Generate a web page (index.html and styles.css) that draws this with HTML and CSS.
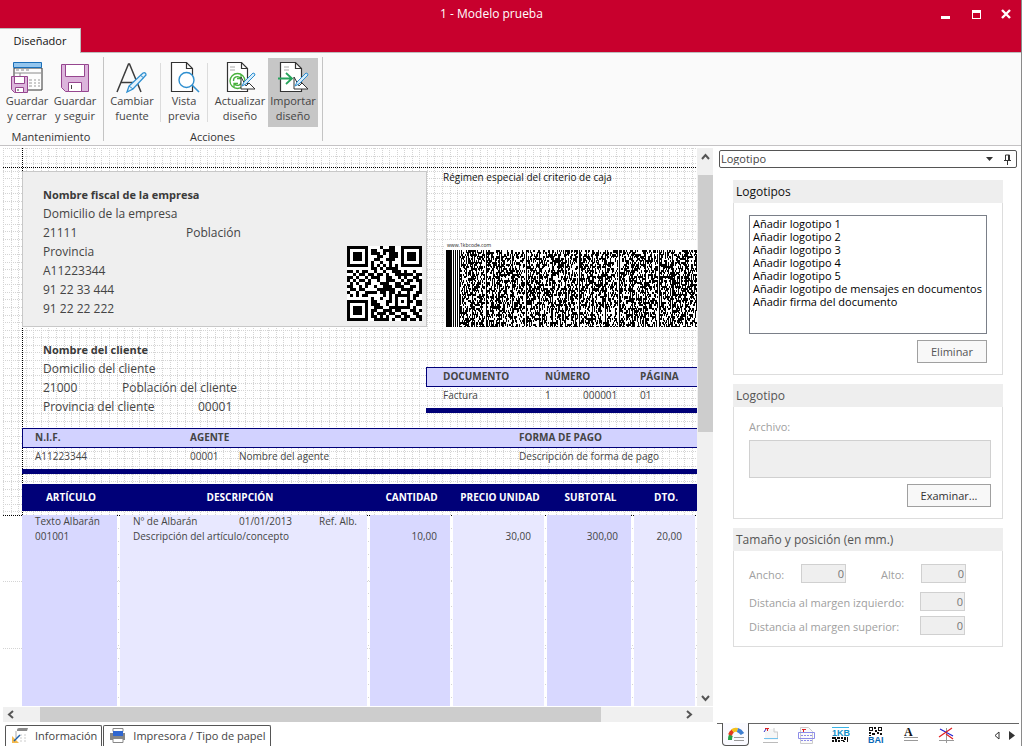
FILE: index.html
```
<!DOCTYPE html>
<html lang="es">
<head>
<meta charset="utf-8">
<title>1 - Modelo prueba</title>
<link rel="stylesheet" href="styles.css">
</head>
<body>
<div class="window">
  <header class="titlebar">
    <h1 class="title">1 - Modelo prueba</h1>
    <button class="winbtn" aria-label="Minimizar"><svg width="12" height="12"><path d="M1 8h9v3H1z" fill="#fff"/></svg></button>
    <button class="winbtn" aria-label="Maximizar"><svg width="12" height="12"><path fill="#fff" fill-rule="evenodd" d="M2 2h9v9H2zM3 5v5h7V5z"/></svg></button>
    <button class="winbtn" aria-label="Cerrar"><svg width="12" height="12"><path d="M2 2l8 8M10 2l-8 8" stroke="#fff" stroke-width="2.4"/></svg></button>
  </header>
  <nav class="tabrow"><button class="ribtab">Diseñador</button></nav>

  <section class="ribbon">
    <div class="group">
      <div class="tools">
        <button class="tool w48">
          <svg width="32" height="32"><path d="M3 7h28v22H3z" fill="#fdfdfd" stroke="#333"/><path d="M2.500 1.500h28v5h-28z" fill="#94c6ee" stroke="#1a6fb8"/><path d="M5 9h3m2 0h3m2 0h3M3 12h27M9 12v4" stroke="#8a8a8a" fill="none"/><path d="M18 19h3m2 0h2m2 0h2M18 22h3m2 0h2m2 0h2M18 25h3m2 0h2m2 0h2" stroke="#999"/><path d="M.5 15.500h16v16H3.500l-3-3z" fill="#dcb5dc" stroke="#96468f"/><path d="M3.500 15.500h10v7h-10zM4.500 26.500h8v5h-8z" fill="#fff" stroke="#96468f"/><path d="M7 28v2" stroke="#444"/></svg>
          <span>Guardar<br>y cerrar</span></button>
        <button class="tool w48">
          <svg width="32" height="32"><path d="M2.500 3.500h27v27H6.500l-4-4z" fill="#dcb5dc" stroke="#96468f"/><path d="M6.500 3.500h19v12h-19zM9.500 21.500h13v9h-13z" fill="#fff" stroke="#96468f"/><path d="M12.500 24v4" stroke="#444"/></svg>
          <span>Guardar<br>y seguir</span></button>
      </div>
      <div class="caption">Mantenimiento</div>
    </div>
    <div class="group actions">
      <div class="tools">
        <button class="tool w50">
          <svg width="32" height="32" fill="none"><path d="M1 31L12.500 3h1L25 31M5 21.500h16" stroke="#3c3c3c" stroke-width="1.500"/><path d="M11 31l2-6L27 12q3-1 3 2L17 28z" fill="#e5f2fb" stroke="#2e8fd0" stroke-width="1.300"/><path d="M13 25l4 3M24 14l4 3" stroke="#2e8fd0"/></svg>
          <span>Cambiar<br>fuente</span></button>
        <i class="minisep"></i>
        <button class="tool w42">
          <svg width="32" height="32" fill="none"><path d="M3.500 1.500h15l6 6v23h-21z" fill="#fff" stroke="#333" stroke-width="1.200"/><path d="M18.500 1.500v6h6" stroke="#333" stroke-width="1.200"/><circle cx="18.500" cy="19" r="7.500" fill="#fff" stroke="#2e8fd0" stroke-width="1.400"/><path d="M24 24l7 7" stroke="#2e8fd0" stroke-width="1.600"/></svg>
          <span>Vista<br>previa</span></button>
        <i class="minisep"></i>
        <button class="tool w52">
          <svg width="32" height="32" fill="none"><path d="M3.500 1.500h14l6 6v23h-20z" fill="#fff" stroke="#333" stroke-width="1.200"/><path d="M17.500 1.500v6h6" stroke="#333" stroke-width="1.200"/><path d="M6 6h5M6 9h5" stroke="#aaa"/><circle cx="13.500" cy="20" r="7.500" stroke="#48b13c" stroke-width="1.300"/><path d="M9.500 20a4 4 0 0 1 7-3M17.500 20a4 4 0 0 1-7 3M17 14v3.500h-4M10 26v-3.500h4" stroke="#48b13c" stroke-width="1.300"/><path d="M17 16v12h14l-6-6-3 3z" fill="#fff" stroke="#333"/><path d="M18 25l2-4 9-9q2 0 2 2l-9 9z" fill="#d7ecfa" stroke="#2e8fd0"/></svg>
          <span>Actualizar<br>diseño</span></button>
        <button class="tool w50 on">
          <svg width="32" height="32" fill="none"><path d="M3.500 1.500h15l6 6v23h-21z" fill="#fff" stroke="#333" stroke-width="1.200"/><path d="M18.500 1.500v6h6" stroke="#333" stroke-width="1.200"/><path d="M7 6h5M7 9h5" stroke="#aaa"/><path d="M1 17.500h13M9 12l6 5.500-6 5.500" stroke="#27a35c" stroke-width="1.800"/><path d="M17 16v12h14l-6-6-3 3z" fill="#fff" stroke="#333"/><path d="M18 25l2-4 9-9q2 0 2 2l-9 9z" fill="#d7ecfa" stroke="#2e8fd0"/></svg>
          <span>Importar<br>diseño</span></button>
      </div>
      <div class="caption">Acciones</div>
    </div>
  </section>

  <main class="work">
    <section class="editor">
      <div class="viewport">
        <svg class="grid" id="grid" width="100%" height="100%"></svg>

        <div class="block company">
          <div class="lines">
            <b>Nombre fiscal de la empresa</b>
            <span>Domicilio de la empresa</span>
            <span class="pair"><span>21111</span><span>Población</span></span>
            <span>Provincia</span>
            <span>A11223344</span>
            <span>91 22 33 444</span>
            <span>91 22 22 222</span>
          </div>
          <canvas id="qr" width="75" height="75"></canvas>
        </div>

        <p class="block regime">Régimen especial del criterio de caja</p>
        <div class="block kb"><span>www.1kbcode.com</span><canvas id="kb" width="330" height="77"></canvas></div>

        <div class="block client lines">
          <b>Nombre del cliente</b>
          <span>Domicilio del cliente</span>
          <span class="town"><span>21000</span><span>Población del cliente</span></span>
          <span class="prov"><span>Provincia del cliente</span><span>00001</span></span>
        </div>

        <table class="block data docdata">
          <colgroup><col class="d1"><col class="d2"><col class="d3"><col></colgroup>
          <thead><tr><th>DOCUMENTO</th><th colspan="2">NÚMERO</th><th>PÁGINA</th></tr></thead>
          <tbody><tr><td>Factura</td><td>1</td><td>000001</td><td>01</td></tr></tbody>
        </table>

        <table class="block data nifdata">
          <colgroup><col class="n1"><col class="n2"><col class="n3"><col></colgroup>
          <thead><tr><th>N.I.F.</th><th colspan="2">AGENTE</th><th>FORMA DE PAGO</th></tr></thead>
          <tbody><tr><td>A11223344</td><td>00001</td><td>Nombre del agente</td><td>Descripción de forma de pago</td></tr></tbody>
        </table>

        <table class="block items">
          <colgroup><col class="c1"><col class="c2"><col class="c3"><col class="c4"><col class="c5"><col class="c6"><col></colgroup>
          <thead><tr><th>ARTÍCULO</th><th>DESCRIPCIÓN</th><th>CANTIDAD</th><th>PRECIO UNIDAD</th><th>SUBTOTAL</th><th>DTO.</th><th></th></tr></thead>
          <tbody>
            <tr><td>Texto Albarán</td><td><div class="note"><span>Nº de Albarán</span><span>01/01/2013</span><span>Ref. Alb.</span></div></td><td></td><td></td><td></td><td></td><td></td></tr>
            <tr><td>001001</td><td>Descripción del artículo/concepto</td><td class="num">10,00</td><td class="num">30,00</td><td class="num">300,00</td><td class="num">20,00</td><td></td></tr>
            <tr class="rest"><td></td><td></td><td></td><td></td><td></td><td></td><td></td></tr>
          </tbody>
        </table>
      </div>
      <div class="vbar"><svg width="15" height="27"><path d="M4 11l3.500-4 3.500 4" fill="none" stroke="#555" stroke-width="2"/></svg><div class="vthumb"></div><svg class="end" width="15" height="18"><path d="M4 8l3.500 4 3.500-4" fill="none" stroke="#555" stroke-width="2"/></svg></div>
      <div class="hbar"><svg width="37" height="15"><path d="M10 4L6 7.500l4 3.500" fill="none" stroke="#555" stroke-width="2"/></svg><div class="hthumb"></div><svg class="end" width="32" height="15"><path d="M6 4l4 3.500L6 11" fill="none" stroke="#555" stroke-width="2"/></svg></div>
      <nav class="foottabs">
        <button><svg width="17" height="17" fill="none"><path d="M6 3q0-2 2-2h9l-1 3H6z" fill="#8a8a8a"/><path d="M5 4v7" stroke="#aaa"/><path d="M9 8h2m2 0h2M9 11h2m2 0h2M9 14h2m2 0h2" stroke="#ccc"/><path d="M1 9l7 7H1z" fill="#f3b94d"/><path d="M3 14l6-6" stroke="#1c5fa8" stroke-width="1.500"/></svg>Información</button>
        <button><svg width="17" height="17"><path d="M4 1.500h10v3H4z" fill="#fff" stroke="#888"/><path d="M1 6h15v7H1z" fill="#868686"/><path d="M4 4h10v5H4z" fill="#2f66d0"/><path d="M4 11.500h10v4H4z" fill="#fff" stroke="#888"/></svg>Impresora / Tipo de papel</button>
      </nav>
    </section>

    <aside class="side">
      <div class="chooser">
        <select aria-label="Panel"><option>Logotipo</option></select>
        <svg width="7" height="4"><path d="M0 0h7L3.500 4z" fill="#333"/></svg>
        <button aria-label="Fijar panel"><svg width="9" height="11" fill="none" stroke="#333"><path d="M2.500 6V1h4v5M5.500 1v5M1 6.500h7M4.500 7v4"/></svg></button>
      </div>

      <fieldset class="panel">
        <h2>Logotipos</h2>
        <div class="body logos">
          <select class="list" size="9" aria-label="Logotipos">
            <option>Añadir logotipo 1</option><option>Añadir logotipo 2</option><option>Añadir logotipo 3</option><option>Añadir logotipo 4</option><option>Añadir logotipo 5</option><option>Añadir logotipo de mensajes en documentos</option><option>Añadir firma del documento</option>
          </select>
          <button class="btn">Eliminar</button>
        </div>
      </fieldset>

      <fieldset class="panel dim">
        <h2>Logotipo</h2>
        <div class="body file">
          <label for="archivo">Archivo:</label>
          <textarea id="archivo" disabled></textarea>
          <button class="btn wide">Examinar...</button>
        </div>
      </fieldset>

      <fieldset class="panel dim">
        <h2>Tamaño y posición (en mm.)</h2>
        <div class="body size">
          <div class="field both"><label for="ancho">Ancho:</label><input id="ancho" value="0" disabled><label for="alto">Alto:</label><input id="alto" value="0" disabled></div>
          <div class="field"><label for="izq">Distancia al margen izquierdo:</label><input id="izq" value="0" disabled></div>
          <div class="field"><label for="sup">Distancia al margen superior:</label><input id="sup" value="0" disabled></div>
        </div>
      </fieldset>

      <nav class="strip">
        <button class="active" aria-label="Logotipo"><svg width="18" height="18" fill="none" stroke-width="4"><path d="M3 15q0-3 1-5" stroke="#27a045"/><path d="M3 10q1-3 3-4" stroke="#e33a1e"/><path d="M5.500 6q2-2 5-1" stroke="#f5c21c"/><path d="M10.500 5q3 1 5 4" stroke="#3f7fd0"/><path d="M7 12.500h10M7 15.500h10" stroke="#999" stroke-width="1"/></svg></button>
        <button aria-label="Texto"><svg width="18" height="18" fill="none"><path d="M3 3h9l4 4v7H3z" fill="#f6f6f6"/><path d="M12 2v4h4M15.500 6v7" stroke="#ccc"/><path d="M3 2h4v1H3zM5 3h1v2H5z" fill="#d22"/><path d="M2 6l2-3" stroke="#33c"/><path d="M2 12.500h14" stroke="#74c3ee"/><path d="M1 16.500h15" stroke="#bbb"/></svg></button>
        <button aria-label="Cuerpo"><svg width="18" height="18" fill="none"><path d="M3.500 1.500h8l4 4v12h-12z" fill="#fafafa" stroke="#ccc"/><path d="M5 3h4v1H5zM6 4h1v2H6z" fill="#d22"/><path d="M1.500 6.500h16v6h-16z" stroke="#8d8de8"/><path d="M4 9.500h12M4 14.500h11" stroke="#8d8de8" stroke-dasharray="2 1"/></svg></button>
        <button aria-label="Código 1KB"><svg width="18" height="18"><path d="M0 1.500h17" stroke="#3ab4e6"/><text x="0" y="10" class="t1kb">1KB</text><path fill="#111" d="M0 11h4v2H0zM5 11h3v2H5zM9 11h2v2H9zM12 11h2v3h-2zM15 11h1v5h-1zM0 14h2v2H0zM3 13h2v3H3zM6 14h2v2H6zM9 14h3v1H9zM11 15h2v1h-2z"/></svg></button>
        <button aria-label="Código BAI"><svg width="18" height="18"><path fill="#111" d="M2 1h4v4H2zM11 1h4v4h-4zM2 6h2v2H2zM7 1h2v2H7zM8 4h2v2H8zM5 7h3v2H5zM10 6h2v2h-2zM13 7h2v2h-2zM2 9h2v1H2z"/><path fill="#fff" d="M3 2h2v2H3zM12 2h2v2h-2z"/><text x="1" y="17" class="tbai">BAI</text></svg></button>
        <button aria-label="Etiquetas"><svg width="18" height="18"><text x="2" y="10" class="ta">A</text><path d="M2 11.500h14M2 14.500h14" stroke="#999"/></svg></button>
        <button aria-label="Líneas"><svg width="18" height="18" fill="none"><path d="M9.500 2v15M2 14.500h15" stroke="#999"/><path d="M3 3l13 7" stroke="#2222d0" stroke-width="1.200"/><path d="M15 2L2 11M9 8l7 5" stroke="#e02020" stroke-width="1.200"/></svg></button>
        <span class="fill"></span>
        <button class="nav" aria-label="Anterior"><svg width="6" height="9"><path d="M5 1v7L1 4.500z" fill="#fff" stroke="#333"/></svg></button>
        <button class="nav" aria-label="Siguiente"><svg width="6" height="9"><path d="M0 0v9l6-4.500z" fill="#333"/></svg></button>
      </nav>
    </aside>
  </main>
</div>
<script src="page.js"></script>
</body>
</html>
```
FILE: styles.css
```
*{box-sizing:border-box}
body{margin:0;font:11px/15px "Open Sans","Noto Sans",sans-serif;color:#444}
h1,h2,p{margin:0;font-weight:400}
button,select,input,textarea{font:inherit;color:inherit;margin:0;padding:0;border:0;background:none;border-radius:0}
svg,canvas{display:block;flex:none}
.window{height:100vh;min-height:640px;display:flex;flex-direction:column;border-right:1px solid #8a8a8a;background:#fff;overflow:hidden}

.titlebar{background:#c8002d;height:28px;display:flex;padding-left:52px;flex:none}
.title{flex:1;text-align:center;color:#fff;font-size:12px;line-height:28px}
.winbtn{width:30px;height:28px;padding:5px 9px 0}
.winbtn svg{margin-top:-6px}
.tabrow{background:#c8002d;height:25px;border-bottom:1px solid #bdbdbd;display:flex;flex:none}
.ribtab{height:25px;width:81px;background:#fafafa;border:1px solid #bdbdbd;border-left:0;border-bottom:0;color:#111;padding-bottom:1px}

.ribbon{background:#fafafa;border-bottom:1px solid #c4c2c4;display:flex;flex:none;height:93px;padding:4px 0}
.group{display:flex;flex-direction:column;border-right:1px solid #c4c4c4;padding:1px 4px 0 3px}
.tools{display:flex;height:69px;flex:none}
.tool{display:flex;flex-direction:column;align-items:center;justify-content:flex-start;padding-top:3px;white-space:nowrap}
.tool svg{overflow:visible}
.w42{width:42px}.w48{width:48px}.w50{width:50px}.w52{width:52px}
.on{background:#c6c6c6;margin-left:2px}
.minisep{width:1px;height:59px;background:#dcdcdc;margin:5px 2px 0 3px}
.w42 + .minisep{margin:5px 6px 0 2px}
.caption{text-align:center;padding-top:2px;color:#333}

.work{flex:1;display:flex;min-height:0}
.editor{flex:1;display:grid;grid-template-columns:1fr 16px;grid-template-rows:1fr 17px 23px;padding:2px 4px 0 3px;min-width:0}
.viewport{position:relative;overflow:hidden;background:#fff;min-width:0}
.grid{position:absolute;inset:0}
.grid .dot{stroke:#d4d4d4;stroke-dasharray:1 1}
.grid .edge{stroke:#000;stroke-dasharray:1 1}
.block{position:absolute}
.lines{display:flex;flex-direction:column;font-size:12px;line-height:19px}
.lines b{font-size:11px;color:#3a3a3a}
.company{left:19px;top:23px;width:405px;height:156px;background:#efefef;border:1px solid #c8c8c8;padding:13px 4px 5px 20px;display:flex;justify-content:space-between}
.company canvas{align-self:flex-end}
.pair{display:grid;grid-template-columns:143px auto}
.regime{left:440px;top:22px;font-size:10px;color:#111}
.kb{left:442px;top:92px;background:#fff;padding:0 0 3px 1px}
.kb span{display:block;font-size:5px;line-height:10px;padding-left:1px;color:#222}
.client{left:40px;top:192px}
.town{display:grid;grid-template-columns:79px auto}
.prov{display:grid;grid-template-columns:155px auto}

table{border-collapse:separate;border-spacing:0;table-layout:fixed;font-size:10px;line-height:13px}
th,td{padding:0;text-align:left}
.data{border-bottom:5px solid #000078}
.data th{height:20px;background:#d2d2ff;border:solid #000078;border-width:1px 0}
.data td{height:21px}
.docdata{left:423px;top:219px;width:348px}
.docdata th,.docdata td{padding:0 0 2px 17px}
.d1{width:102px}.d2{width:38px}.d3{width:57px}
.nifdata{left:19px;top:280px;width:752px}
.nifdata th,.nifdata td{padding:0 0 2px 13px}
.n1{width:155px}.n2{width:49px}.n3{width:280px}
.data td{padding-bottom:4px}
.docdata th:first-child{border-left-width:1px;padding-left:16px}
.nifdata th:first-child{border-left-width:1px;padding-left:12px}
.items{left:19px;top:336px;width:752px;height:calc(100% - 336px)}
.items th{background:#000078 padding-box;border-bottom:4px solid transparent;color:#fff;height:31px;text-align:center}
.items th:nth-child(2){padding-right:10px}
.items td{height:15px;background:#e8e8ff padding-box;border-right:3px solid transparent;padding-left:13px;vertical-align:top}
.items td:nth-child(odd){background-color:#d8d8ff}
.items .rest td{height:auto}
.items .num{text-align:right;padding:0 13px 0 0}
.c1{width:98px}.c2{width:250px}.c3{width:83px}.c4{width:94px}.c5{width:87px}.c6{width:64px}
.note{display:grid;grid-template-columns:106px 80px auto}

.vbar{grid-column:2;grid-row:1;background:#f0f0f0;display:flex;flex-direction:column;padding-left:1px}
.vthumb{height:46%;background:#cdcdcd}
.hbar{grid-column:1 / 3;background:#f0f0f0;display:flex;border-top:1px solid #fff;border-bottom:1px solid #fff}
.hthumb{width:79%;background:#cdcdcd}
.end{margin-top:auto}
.hbar .end{margin:0 0 0 auto}
.foottabs{grid-column:1 / 3;display:flex;gap:1px;padding-left:2px}
.foottabs button{border:1px solid #555;border-bottom:0;display:flex;align-items:center;gap:7px;padding:0 4px 1px 5px;height:21px;border-radius:2px 2px 0 0;align-self:flex-end;white-space:nowrap}

.side{width:304px;flex:none;display:flex;flex-direction:column;padding:4px 2px 0 0}
.chooser{margin:0 2px 12px;border:1px solid #555;border-radius:2px;height:18px;display:flex;align-items:center;padding:0 4px 0 1px}
.chooser select{appearance:none;flex:1;height:16px;padding-bottom:2px}
.chooser button{margin-left:10px}
.panel{border:0;margin:0 16px 9px;padding:0;min-width:0;width:270px}
.panel h2{background:#eee;height:23px;line-height:23px;padding-left:3px;font-size:12px;color:#111}
.dim h2{color:#555}
.body{border:1px solid #ddd;border-top:0;display:flex;flex-direction:column}
.logos{padding:12px 15px 11px;gap:6px;height:172px}
.list{appearance:none;width:238px;height:119px;border:1px solid #7a7f88;padding:0;overflow:hidden;color:#000;background:#fff}
.list option{padding:0 0 0 3px;height:13px;min-height:13px;line-height:13px}
.btn{border:1px solid #a0a0a0;background:#f8f8f8;height:23px;width:70px;align-self:flex-end;color:#555}
.wide{width:84px;color:#333}
.file{padding:12px 11px 11px 15px;height:112px}
.file label,.field label{color:#a0a0a0}
.file textarea{height:38px;border:1px solid #d0d0d0;background:#efefef;resize:none;margin:6px 0 6px}
.size{padding:13px 37px 11px 15px;gap:5px}
.field{display:flex;align-items:center;justify-content:space-between}
.field input{width:45px;height:19px;border:1px solid #d0d0d0;background:#efefef;text-align:right;padding:0 1px 1px 0;color:#777}
.field label{padding-top:1px}
.both{display:grid;grid-template-columns:52px 80px 40px 45px;justify-content:start;padding-bottom:4px}
.strip{margin-top:auto;border-top:1px solid #666;display:flex;height:23px;padding-left:5px;gap:9px}
.strip button{width:26px;height:22px;display:flex;align-items:center;justify-content:center}
.strip .active{width:27px;height:23px;margin-top:-1px;background:#fafaff;border:1px solid #555;border-top:0;border-radius:0 0 4px 4px}
.strip .fill{flex:1}
.strip .nav{width:6px}
.strip .nav:last-child{margin-right:4px}
.t1kb{font:bold 9px "Liberation Sans",sans-serif;fill:#1490c8}
.tbai{font:bold 9px "Liberation Sans",sans-serif;fill:#0868b8}
.ta{font:bold 12px "Liberation Serif",serif;fill:#111}
```
FILE: page.js
```
// Design grid: 2 mm dotted lines in the header band, sparser guides in the detail band
const NS = 'http://www.w3.org/2000/svg';
const grid = document.getElementById('grid');
function line(x1, y1, x2, y2, cls) {
  const l = document.createElementNS(NS, 'line');
  l.setAttribute('x1', x1); l.setAttribute('y1', y1);
  l.setAttribute('x2', x2); l.setAttribute('y2', y2);
  l.setAttribute('class', cls);
  grid.appendChild(l);
}
const BAND = 367, MM2 = 7.57, W = 2400, H = 2400;
for (let i = 0; i * MM2 < W; i++) {
  const x = Math.round(i * MM2) + .5;
  line(x, 0, x, BAND, 'dot');
}
for (let i = 0; i * MM2 < BAND; i++) {
  const y = Math.round(i * MM2) + .5;
  line(0, y, W, y, 'dot');
}
for (let y = BAND + 66; y < H; y += 67) line(0, y + .5, W, y + .5, 'dot');
// short ticks in the gaps between the detail columns
for (const x of [115, 365, 448, 542, 629, 693]) {
  for (let y = BAND + 13; y < H; y += 13) line(x, y + .5, x + 2, y + .5, 'dot');
}
line(19.5, 0, 19.5, BAND, 'edge');
line(0, 19.5, W, 19.5, 'edge');
line(0, BAND + .5, W, BAND + .5, 'edge');

// QR code, one string per module row
const QR = [
  '1111111000010011001111111',
  '1000001011001111001000001',
  '1011101011101011101011101',
  '1011101000110011101011101',
  '1011101001100111001011101',
  '1000001010010010001000001',
  '1111111010101010101111111',
  '0000000011010111100000000',
  '1101011001001001110100100',
  '0010110110110100111111011',
  '1101001011100110010100110',
  '1010110100100111001011011',
  '0101001100011100110110001',
  '1100101001001110111001101',
  '0110110000111111001111001',
  '1001001111011011010010011',
  '0101011000001010111110110',
  '0000000010010010100010100',
  '1111111011000110101011011',
  '1000001011100100100010011',
  '1011101001110011111110100',
  '1011101011001110110001101',
  '1011101010111011001100110',
  '1000001011010100110110011',
  '1111111001111101001101101'
];
const q = document.getElementById('qr').getContext('2d');
q.fillStyle = '#fff'; q.fillRect(0, 0, 75, 75);
q.fillStyle = '#000';
QR.forEach((row, y) => [...row].forEach((m, x) => { if (m === '1') q.fillRect(x * 3, y * 3, 3, 3); }));

// 1KB code: start bars, then data columns parted by a thin bar
const k = document.getElementById('kb').getContext('2d');
k.fillStyle = '#000';
k.fillRect(0, 0, 6, 77); k.fillRect(7, 0, 1, 77); k.fillRect(9, 0, 1, 77); k.fillRect(11, 0, 1, 77);
let seed = 20130101;
const rnd = () => (seed = (seed * 1103515245 + 12345) % 2147483648) / 2147483648;
for (let c = 0; c < 24; c++) {
  const x0 = 13 + Math.round(c * 13.3);
  k.fillRect(x0, 0, 1, 77);
  for (let x = 1; x < 13; x++) {
    for (let y = 0; y < 77; y += 2) if (rnd() < .45) k.fillRect(x0 + x, y, 1, rnd() < .4 ? 3 : 2);
  }
}
```
